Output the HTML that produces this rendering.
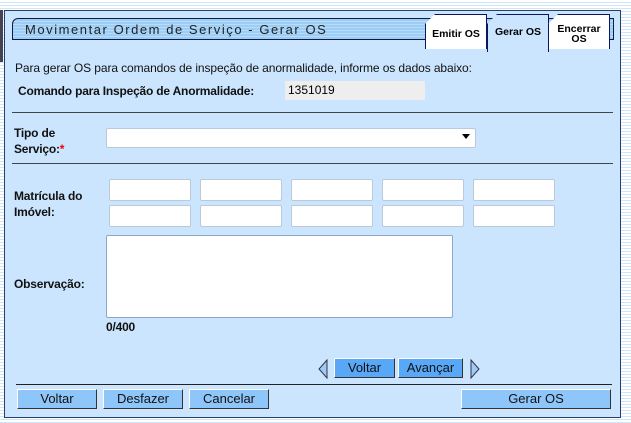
<!DOCTYPE html>
<html><head><style>
body{margin:0;width:631px;height:423px;overflow:hidden;font-family:"Liberation Sans",Arial,sans-serif;font-size:12px;
background:repeating-linear-gradient(#fff 0,#fff 2px,#cfe6f8 2px,#cfe6f8 3px);position:relative}
.a{position:absolute}
#panel{left:4px;top:10px;width:615px;height:406px;background:#cbe5fe;border:1px solid #2a3f66}
.hdr{left:12px;top:18px;width:600px;height:20px;border:1px solid #111a40;border-top-left-radius:6px;
background:repeating-linear-gradient(#9ccdf5 0,#9ccdf5 2px,#b8dcf9 2px,#b8dcf9 3px)}
.hdr span{position:absolute;left:12px;top:3px;font-size:13px;letter-spacing:1.55px;color:#222}
.tab{top:14px;height:35px;border:1px solid #0a1660;border-bottom:none;font-weight:bold;font-size:10.5px;text-align:center;box-sizing:border-box;clip-path:polygon(10px 0,100% 0,100% 100%,0 100%,0 10px)}
.lbl{font-weight:bold;color:#111;letter-spacing:-0.2px}
.hr{left:12px;width:601px;height:1px;background:#444}
.in{background:#fff;border:1px solid #bcc9d6;border-radius:2px;box-sizing:border-box}
.btn{background:#8ec6fa;border:1px solid #333;border-top-color:#fff;border-left-color:#fff;box-sizing:border-box;text-align:center;font-size:13px;color:#111;height:20px;line-height:18px}
.btn2{background:#58a8f7}
</style></head><body>
<div class="a" style="left:0;top:10px;width:3px;height:52px;background:#445"></div>
<div id="panel" class="a"></div>
<div class="a hdr"><span>Movimentar Ordem de Serviço - Gerar OS</span></div>
<div class="a tab" style="left:425px;width:62px;background:#fff;padding-top:13px">Emitir OS</div>
<div class="a tab" style="left:487px;width:62px;background:#cbe5fe;padding-top:11px;height:38px">Gerar OS</div>
<div class="a tab" style="left:548px;width:62px;background:#fff;padding-top:9px;line-height:10px">Encerrar<br>OS</div>
<div class="a" style="left:15px;top:61px;font-size:12px;color:#111;letter-spacing:-0.1px">Para gerar OS para comandos de inspeção de anormalidade, informe os dados abaixo:</div>
<div class="a lbl" style="left:18px;top:84px">Comando para Inspeção de Anormalidade:</div>
<div class="a" style="left:285px;top:81px;width:137px;height:19px;background:#eee;line-height:19px;padding-left:3px">1351019</div>
<div class="a hr" style="top:112px"></div>
<div class="a lbl" style="left:14px;top:125px;line-height:16px">Tipo de<br>Serviço:<span style="color:#e00">*</span></div>
<div class="a in" style="left:106px;top:128px;width:370px;height:20px"></div>
<div class="a" style="left:462px;top:134px;width:0;height:0;border-left:4px solid transparent;border-right:4px solid transparent;border-top:5px solid #000"></div>
<div class="a hr" style="top:163px"></div>
<div class="a lbl" style="left:14px;top:188px;line-height:16px">Matrícula do<br>Imóvel:</div>
<div class="a in" style="left:109px;top:179px;width:82px;height:22px"></div>
<div class="a in" style="left:200px;top:179px;width:82px;height:22px"></div>
<div class="a in" style="left:291px;top:179px;width:82px;height:22px"></div>
<div class="a in" style="left:382px;top:179px;width:82px;height:22px"></div>
<div class="a in" style="left:473px;top:179px;width:82px;height:22px"></div>
<div class="a in" style="left:109px;top:205px;width:82px;height:22px"></div>
<div class="a in" style="left:200px;top:205px;width:82px;height:22px"></div>
<div class="a in" style="left:291px;top:205px;width:82px;height:22px"></div>
<div class="a in" style="left:382px;top:205px;width:82px;height:22px"></div>
<div class="a in" style="left:473px;top:205px;width:82px;height:22px"></div>
<div class="a lbl" style="left:14px;top:277px">Observação:</div>
<div class="a in" style="left:106px;top:235px;width:347px;height:83px;border-color:#8aa8c8"></div>
<div class="a lbl" style="left:106px;top:320px">0/400</div>
<svg class="a" style="left:317px;top:359px" width="12" height="20"><path d="M10 1 L2 10 L10 19 Z" fill="#9ccbf5" stroke="#334" stroke-width="1"/></svg>
<div class="a btn btn2" style="left:334px;top:358px;width:61px">Voltar</div>
<div class="a btn btn2" style="left:398px;top:358px;width:65px">Avançar</div>
<svg class="a" style="left:469px;top:359px" width="12" height="20"><path d="M2 1 L10 10 L2 19 Z" fill="#9ccbf5" stroke="#334" stroke-width="1"/></svg>
<div class="a" style="left:16px;top:384px;width:596px;height:1px;background:#222"></div>
<div class="a btn" style="left:17px;top:389px;width:80px">Voltar</div>
<div class="a btn" style="left:103px;top:389px;width:80px">Desfazer</div>
<div class="a btn" style="left:189px;top:389px;width:80px">Cancelar</div>
<div class="a btn" style="left:461px;top:389px;width:150px">Gerar OS</div>
</body></html>
